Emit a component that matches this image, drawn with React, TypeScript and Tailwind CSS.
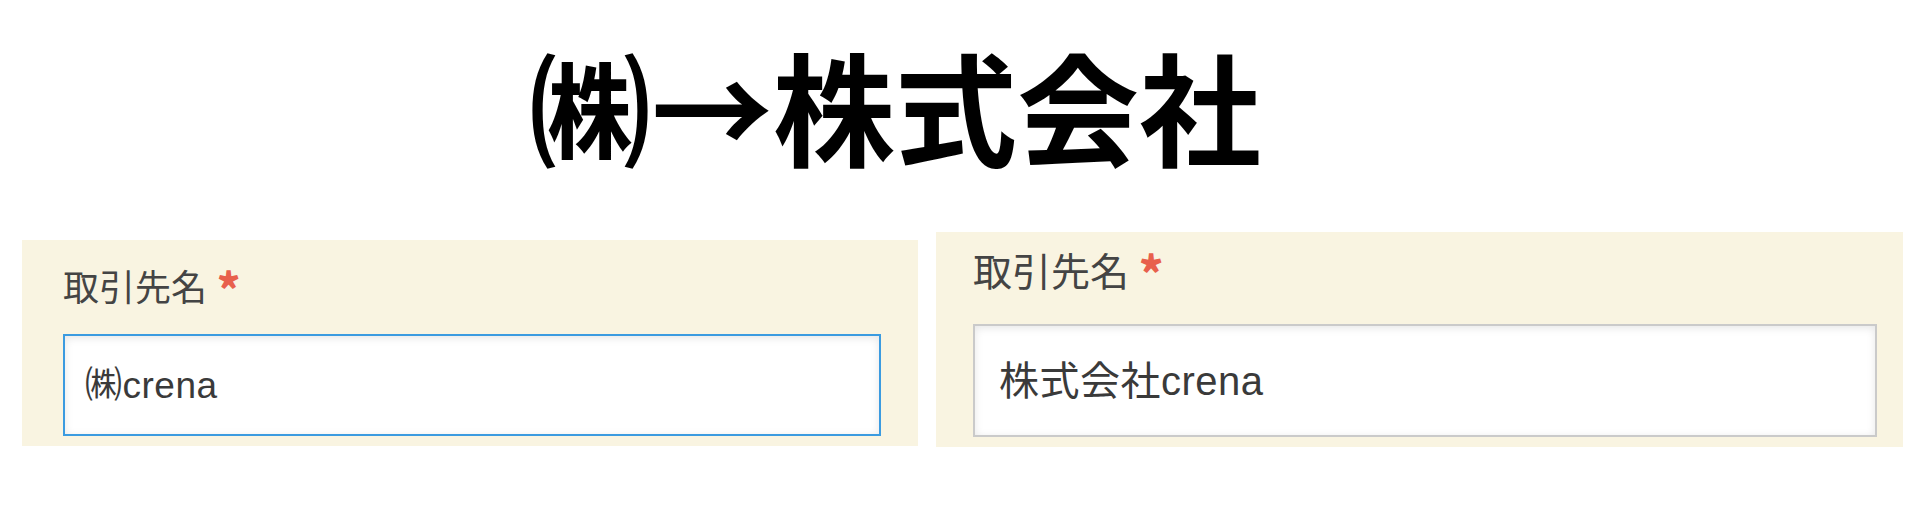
import React from 'react'

const jp = { fontFamily: '"Noto Sans CJK JP", "Noto Sans", sans-serif' }

const Field: React.FC<{ value: string, focused?: boolean, big?: boolean }> = ({ value, focused, big }) => {
    return (
        <div className={big ? 'w-[967px] h-[215px] bg-[#f9f4e1] pl-[37px] pt-[18px]' : 'w-[896px] h-[206px] bg-[#f9f4e1] pl-[41px] pt-[27px]'}>
            <div className={big ? 'flex items-start h-[39px] text-[39px] leading-none text-[#444]' : 'flex items-start h-[36px] text-[36px] leading-none text-[#444]'}>
                <span>取引先名</span>
                <span className={big ? 'ml-[10px] -mt-[2px] h-[39px] text-[#e8604c] font-black text-[46px] leading-none' : 'ml-[10px] -mt-[2px] h-[36px] text-[#e8604c] font-black text-[44px] leading-none'}>*</span>
            </div>
            <div
                className={
                    focused
                        ? 'mt-[31px] w-[818px] h-[102px] border-2 border-[#3b9be0] bg-white shadow-[inset_0_2px_8px_rgba(0,0,0,0.10)] flex items-center pl-[20px]'
                        : 'mt-[35px] w-[904px] h-[113px] border-2 border-[#cacaca] bg-white shadow-[inset_0_2px_8px_rgba(0,0,0,0.10)] flex items-center pl-[24px]'
                }
            >
                <span
                    className={big ? 'text-[40px] leading-none tracking-[0.5px] text-[#3a3a3a]' : 'text-[37px] leading-none tracking-[0.5px] text-[#3a3a3a]'}
                    style={{ fontFamily: '"Liberation Sans", "Noto Sans CJK JP", sans-serif' }}
                >
                    {value}
                </span>
            </div>
        </div>
    )
}

const App: React.FC = () => {
    return (
        <div className="w-[1920px] h-[510px] bg-white overflow-hidden" style={jp}>
            <div className="h-[172px] pt-[43px] pl-[529px] text-[122px] font-bold leading-none text-black">
                ㈱→株式会社
            </div>
            <div className="mt-[60px] flex items-start">
                <div className="ml-[22px] mt-[8px]">
                    <Field value="㈱crena" focused />
                </div>
                <div className="ml-[18px]">
                    <Field value="株式会社crena" big />
                </div>
            </div>
        </div>
    )
}

export default App
